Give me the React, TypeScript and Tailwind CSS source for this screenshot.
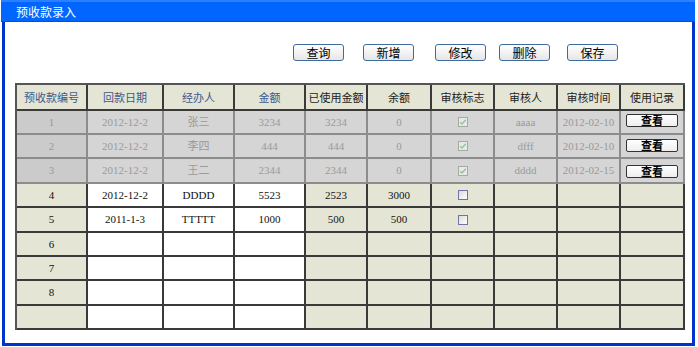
import React from "react";

const widths = [71, 76, 71, 71, 62, 64, 63, 63, 63, 64];
const headers = ["预收款编号", "回款日期", "经办人", "金额", "已使用金额", "余额", "审核标志", "审核人", "审核时间", "使用记录"];
const rowHeights = [24, 24, 25, 24, 25, 24, 24, 25, 24];

const greyRows = [
  ["1", "2012-12-2", "张三", "3234", "3234", "0", "aaaa", "2012-02-10"],
  ["2", "2012-12-2", "李四", "444", "444", "0", "dfff", "2012-02-10"],
  ["3", "2012-12-2", "王二", "2344", "2344", "0", "dddd", "2012-02-15"],
];

const editRows = [
  ["4", "2012-12-2", "DDDD", "5523", "2523", "3000", true],
  ["5", "2011-1-3", "TTTTT", "1000", "500", "500", true],
  ["6", "", "", "", "", "", false],
  ["7", "", "", "", "", "", false],
  ["8", "", "", "", "", "", false],
  ["", "", "", "", "", "", false],
];

const btnOffsets = [3, 4, 6];

function CheckedBox() {
  return (
    <div className="w-[10px] h-[10px] border border-[#a8a8a8] bg-[#e8e8e8] flex items-center justify-center">
      <svg width="8" height="8" viewBox="0 0 8 8">
        <path d="M1.2 4.2 L3 6 L6.8 1.8" fill="none" stroke="#8fc88f" strokeWidth="1.4" />
      </svg>
    </div>
  );
}

function EmptyBox() {
  return <div className="w-[10px] h-[10px] border border-[#6f73a8] bg-gradient-to-br from-[#dcdcdc] to-[#ffffff]" />;
}

function TopButton({ label, ml }: { label: string; ml: number }) {
  return (
    <div
      className="w-[51px] h-[17px] border border-[#3f6c9f] rounded-[3px] bg-gradient-to-b from-white to-[#e6e6e6] flex items-center justify-center text-[12px] text-black leading-none"
      style={{ marginLeft: ml }}
    >
      {label}
    </div>
  );
}

export default function App() {
  const font = "font-['Liberation_Serif','Noto_Sans_CJK_SC',serif]";
  return (
    <div className={`w-[698px] h-[347px] bg-white overflow-hidden ${font}`}>
      <div className="ml-[1px] w-[694px] h-[347px] flex flex-col">
        <div className="h-[22px] bg-[#0066ff] border-t-2 border-t-[#2a80ff] border-b border-b-[#0050dd] flex items-center pl-[15px] text-white text-[12px] font-['Noto_Sans_CJK_SC',sans-serif] leading-none">
          预收款录入
        </div>
        <div className="flex-1 ml-[1px] border-l-[3px] border-r-[3px] border-b-[3px] border-[#0033cc] mb-[1px] flex flex-col">
          <div className="flex mt-[22px] font-['Noto_Sans_CJK_SC',sans-serif]">
            <TopButton label="查询" ml={288} />
            <TopButton label="新增" ml={19} />
            <TopButton label="修改" ml={21} />
            <TopButton label="删除" ml={13} />
            <TopButton label="保存" ml={17} />
          </div>
          <div className="mt-[22px] ml-[10px] w-[670px] border-t-2 border-l-2 border-[#555] flex flex-col">
            <div className="flex h-[26px]">
              {headers.map((h, i) => (
                <div
                  key={i}
                  className={`h-full bg-[#e5e5d6] border-r-2 border-b-2 border-[#3a3a3a] flex items-center justify-center text-[11px] font-['Noto_Sans_CJK_SC',sans-serif] ${i < 4 ? "text-[#3c5a8c]" : "text-[#222]"}`}
                  style={{ width: widths[i] }}
                >
                  {h}
                </div>
              ))}
            </div>
            {greyRows.map((r, ri) => (
              <div key={ri} className="flex" style={{ height: rowHeights[ri] }}>
                {widths.map((w, ci) => {
                  let content: React.ReactNode = null;
                  if (ci < 6) content = r[ci];
                  else if (ci === 6) content = <CheckedBox />;
                  else if (ci === 7) content = r[6];
                  else if (ci === 8) content = r[7];
                  return (
                    <div
                      key={ci}
                      className={`h-full border-r-2 border-b-2 border-[#8c8c8c] flex justify-center text-[11px] text-[#9a9a9a] ${ci === 0 ? "bg-[#cbcbcb]" : "bg-[#d5d5d5]"} ${ci === 9 ? "items-start" : "items-center"}`}
                      style={{ width: w }}
                    >
                      {ci === 9 ? (
                        <div
                          className="w-[52px] h-[13px] border border-[#333] rounded-[2px] bg-gradient-to-b from-white to-[#eeeeee] flex items-center justify-center text-[11px] text-black font-bold font-['Noto_Sans_CJK_SC',sans-serif] leading-none"
                          style={{ marginTop: btnOffsets[ri] }}
                        >
                          查看
                        </div>
                      ) : (
                        content
                      )}
                    </div>
                  );
                })}
              </div>
            ))}
            {editRows.map((r, ri) => (
              <div key={ri} className="flex" style={{ height: rowHeights[ri + 3] }}>
                {widths.map((w, ci) => {
                  let content: React.ReactNode = null;
                  if (ci < 6) content = r[ci] as string;
                  else if (ci === 6 && r[6]) content = <EmptyBox />;
                  const white = ci >= 1 && ci <= 3;
                  return (
                    <div
                      key={ci}
                      className={`h-full border-r-2 border-b-2 border-[#3a3a3a] flex items-center justify-center text-[11px] text-[#111] ${white ? "bg-white" : "bg-[#e5e5d6]"}`}
                      style={{ width: w }}
                    >
                      {content}
                    </div>
                  );
                })}
              </div>
            ))}
          </div>
        </div>
      </div>
    </div>
  );
}
